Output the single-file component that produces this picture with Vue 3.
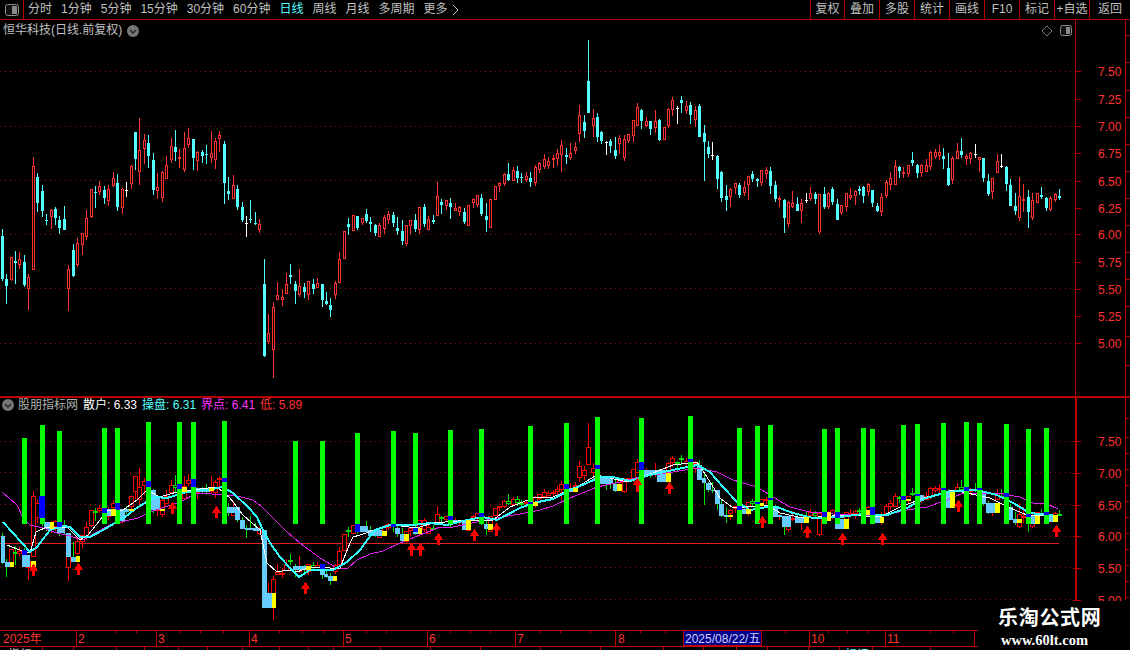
<script setup>
const parse = (s, ox, oy) =>
  s.trim().split(/\s*;\s*/).map((r) => {
    const [x, h, t, b, l, k] = r.split(' ')
    return {
      x: Math.floor(ox + +x / 3),
      h: oy + +h / 3,
      t: Math.round(oy + +t / 3),
      b: Math.round(oy + +b / 3),
      l: oy + +l / 3,
      k
    }
  })

const candles = [
  ...parse(`7 327 348 477 483 c;19 462 477 498 552 c;34 410 412 480 482 r;46 393 423 429 492 c;58 396 417 435 447 r;73 405 426 495 501 c;85 462 471 507 570 r;100 111 138 450 450 r;112 159 171 249 276 c;127 195 213 273 291 c;139 282 300 303 315 c;154 267 270 291 327 r;166 261 267 294 315 c;178 288 300 324 342 c;193 258 297 330 330 c;205 435 447 507 573 r;220 372 390 468 471 c;232 354 369 435 441 r;247 339 339 375 405 r;259 270 294 351 360 r;274 207 207 291 294 r;286 198 216 219 264 c;298 183 198 216 225 r;313 198 210 234 252 c;325 195 207 243 258 r;340 156 174 198 201 r;352 162 189 261 273 c;367 204 207 264 282 r;379 186 210 213 231 w;394 135 138 192 207 r;406 36 36 117 150 c;418 -6 90 156 195 r;433 42 60 87 132 r;445 45 69 108 144 c;460 99 120 210 225 c;472 159 201 213 237 r;487 153 156 234 246 r;499 108 135 177 177 r;514 54 78 120 129 r;526 30 81 96 123 c;538 87 111 117 144 r;553 36 84 150 156 r;565 24 54 75 84 r;580 57 57 114 150 c;592 93 96 123 153 r;607 90 96 108 129 c;619 75 102 105 132 c;634 33 99 114 129 r;646 54 63 120 147 r;658 33 45 57 96 r;673 63 72 189 252 c;685 171 213 222 240 c;700 165 195 237 237 r;712 195 207 261 270 c;727 246 261 300 306 c;739 288 309 312 351 w;751 240 297 300 309 c;766 276 309 312 315 c;778 297 312 330 339 r;793 417 492 708 711 c;805 582 639 666 672 r`, 0, 120),
  ...parse(`10 816 831 960 1044 r;22 756 795 810 810 r;37 777 801 810 828 r;49 729 762 792 792 r;61 702 735 741 762 c;76 753 762 783 822 c;88 717 768 795 801 r;103 759 771 786 804 c;115 753 753 795 810 r;130 747 762 777 792 c;142 744 759 774 774 r;157 762 762 810 831 c;169 786 813 822 825 c;181 804 825 840 861 c;196 753 759 795 807 r;208 666 687 759 759 r;223 603 603 687 687 r;235 564 582 591 615 c;250 555 555 603 603 r;262 558 558 594 600 c;277 564 564 579 585 r;289 537 552 573 579 c;301 561 576 582 606 c;316 582 585 609 618 c;328 579 585 621 621 r;343 555 561 597 612 r;355 543 552 570 582 r;370 546 555 579 591 c;382 561 594 603 615 c;397 570 603 633 645 c;409 585 585 642 648 r;421 570 570 588 612 r;436 552 570 597 606 c;448 531 531 600 612 r;463 522 531 582 591 c;475 558 567 600 600 r;490 555 570 576 582 c;502 456 498 558 558 r;514 507 516 525 552 c;529 510 510 528 540 r;541 504 519 531 567 c;556 519 534 543 543 r;568 528 531 546 558 r;583 534 546 576 582 c;595 525 525 588 588 r;610 504 507 519 534 r;622 495 495 525 531 r;634 492 504 552 558 c;649 519 558 570 606 c;661 507 507 594 594 r;676 468 468 510 510 r;688 456 459 468 486 r;703 429 432 462 468 r;715 399 432 450 453 c;730 411 420 453 453 r;742 408 423 444 459 c;754 429 441 444 459 c;769 426 438 450 456 r;781 426 444 456 471 c;796 405 411 459 468 r;808 396 399 420 429 r`, 270, 30),
  ...parse(`13 372 387 411 417 r;25 381 393 408 417 r;40 375 384 390 414 r;52 357 369 387 408 r;64 330 345 375 426 r;79 354 375 381 402 c;91 339 369 384 390 r;106 336 351 363 372 r;118 225 255 312 336 r;133 255 276 303 324 c;145 30 153 249 249 c;160 237 264 288 321 r;172 249 261 321 336 c;184 303 306 333 342 c;199 333 336 339 375 w;211 327 333 348 369 c;226 321 360 378 387 c;238 315 324 342 372 r;253 315 327 384 393 r;265 312 312 333 339 r;280 270 270 318 336 r;292 219 231 288 288 r;304 237 240 273 297 c;319 261 273 288 291 r;331 273 273 297 315 c;346 240 273 294 309 r;358 267 270 330 333 c;373 291 291 330 330 r;385 234 237 288 294 r;397 201 210 240 258 r;412 228 234 237 282 w;424 198 210 219 249 c;439 213 228 243 252 r;451 216 225 255 282 c;466 228 240 270 291 r;478 222 228 321 321 c;493 285 309 336 453 c;505 333 351 372 384 c;517 336 375 378 390 w;532 375 378 447 477 c;544 423 426 504 516 c;559 465 498 510 543 c;571 474 477 501 531 r;586 459 459 474 492 r;598 459 465 495 504 c;613 453 471 489 498 r;625 438 438 465 510 r;637 423 432 447 456 c;652 444 447 453 471 c;664 420 420 459 468 r;679 411 420 432 447 r;691 411 423 468 492 c;706 453 465 507 516 c;718 498 504 510 531 r;733 507 510 564 609 c;745 513 516 582 591 r;757 483 519 531 534 r;772 501 522 543 543 c;784 507 519 543 579 r;799 489 510 513 519 w`, 540, 30),
  ...parse(`0 201 219 237 243 r;15 216 222 237 252 c;28 222 222 336 342 r;43 201 222 261 267 c;55 216 219 261 267 r;67 201 207 246 255 c;82 237 252 300 300 c;94 255 255 279 285 r;109 219 219 261 273 r;121 204 225 234 240 r;136 210 213 228 255 r;148 198 207 213 225 c;160 198 201 228 249 c;175 189 192 216 228 r;187 210 210 249 261 c;202 249 258 273 276 c;214 219 231 276 288 r;229 180 186 228 234 r;241 156 174 195 210 r;256 120 138 195 195 r;268 138 141 153 174 c;280 141 156 162 174 r;295 135 135 162 171 r;307 96 120 129 138 c;322 132 135 159 174 c;334 132 135 159 171 r;349 117 135 156 156 r;361 93 96 141 150 r;376 87 96 111 117 r;388 75 96 108 120 r;400 84 108 117 147 c;415 99 144 195 198 c;427 108 114 180 192 r;442 69 93 117 117 r;454 54 93 105 114 c;469 102 108 117 135 r;481 96 99 117 132 r;496 72 102 105 114 w;508 111 111 120 156 r;520 114 114 174 186 c;535 162 183 222 228 c;547 174 174 216 237 r;562 102 123 159 159 r;574 102 138 141 144 w;589 138 141 192 213 c;601 177 195 258 258 c;616 219 258 273 285 c;628 171 228 294 303 r;640 192 237 243 276 r;655 210 231 276 324 c;667 219 240 294 300 r;682 219 219 249 249 r;694 201 225 231 237 c;709 231 234 264 273 c;721 228 234 270 273 r;736 219 222 240 246 r;748 207 228 234 240 c`, 810, 120)
]

const upperGrid = [71.5, 126.5, 180.5, 234.5, 288.5, 343.5]
const upperLabels = [
  ['7.50', 71], ['7.25', 99], ['7.00', 126], ['6.75', 153], ['6.50', 181], ['6.25', 208],
  ['6.00', 234], ['5.75', 262], ['5.50', 289], ['5.25', 316], ['5.00', 343]
]
const lowerGrid = [441.5, 472.5, 504.5, 536.5, 567.5, 599.5]
const lowerLabels = [['7.50', 441], ['7.00', 473], ['6.50', 505], ['6.00', 536], ['5.50', 568], ['5.00', 600]]

const bars = [[22,438],[40,425],[57,431],[102,428],[115,428],[146,422],[177,422],[191,422],[222,421],[293,441],[320,441],[355,433],[391,431],[413,433],[448,430],[479,429],[528,426],[564,423],[595,417],[639,418],[688,416],[737,428],[755,426],[768,425],[822,429],[835,428],[861,428],[870,429],[901,425],[915,424],[941,423],[964,422],[977,423],[1004,424],[1026,429],[1044,428]]

const sky = [[1,5,536,563],[5,10,562,567],[22,30,555,567],[44,50,522,529],[57,65,527,533],[66,71,533,557],[71,76,557,562],[107,111,509,516],[120,125,509,521],[125,129,509,512],[151,156,490,510],[156,160,496,510],[196,210,488,492],[227,235,507,513],[235,240,507,520],[240,245,520,529],[245,253,528,530],[253,261,528,531],[262,267,530,608],[267,272,593,608],[293,307,566,570],[320,325,569,575],[324,328,574,577],[328,333,576,581],[360,368,526,532],[368,382,530,536],[395,400,528,534],[400,404,534,541],[413,418,532,534],[453,462,520,522],[462,466,520,530],[484,488,524,529],[569,573,488,492],[600,613,477,484],[613,617,484,491],[644,657,470,475],[657,666,470,482],[697,702,465,480],[702,706,478,483],[706,711,483,490],[711,715,490,491],[715,720,490,504],[719,724,504,516],[724,728,515,517],[742,746,509,514],[773,778,508,517],[778,782,515,517],[782,791,516,527],[795,804,517,523],[835,840,524,529],[840,844,519,529],[875,880,517,523],[920,924,495,501],[946,950,492,508],[982,986,491,504],[986,995,503,513],[1009,1013,507,520],[1013,1017,519,523],[1031,1035,516,524],[1049,1053,515,522]]

const yellow = [[10,14,562,567],[31,36,561,567],[50,54,522,529],[76,80,556,562],[111,116,509,516],[129,134,509,511],[160,165,509,511],[182,187,487,492],[209,214,488,491],[272,276,593,608],[306,311,566,570],[333,337,576,581],[382,387,531,536],[404,409,534,541],[418,422,528,534],[466,471,520,530],[488,493,524,530],[533,538,502,506],[573,578,488,492],[617,622,484,491],[666,671,473,482],[728,733,515,517],[746,751,509,514],[760,764,503,506],[804,809,517,523],[827,831,512,521],[844,849,519,529],[866,870,510,515],[880,884,517,523],[906,911,499,501],[950,955,492,508],[995,1000,503,513],[1017,1022,519,523],[1035,1040,516,524],[1053,1058,515,522]]

const blue = [[22,27,550,555],[39,45,496,518],[57,62,522,527],[102,107,508,513],[115,120,503,510],[146,151,481,487],[177,182,484,489],[191,196,479,487],[222,227,478,482],[320,325,564,569],[355,360,524,532],[391,396,524,527],[413,418,528,532],[448,453,516,520],[479,484,513,517],[528,533,502,504],[564,569,484,489],[595,600,465,469],[639,644,462,470],[688,693,459,462],[737,742,506,510],[755,760,502,504],[768,773,498,500],[822,827,512,517],[835,840,512,518],[870,875,507,515],[901,906,496,500],[915,920,494,496],[941,946,488,490],[964,969,487,491],[977,982,488,490],[1004,1009,493,497],[1026,1031,514,517],[1044,1049,512,515]]

const map = (y) => Math.round(536.3 + (y - 234.5) * 0.585)
const covered = (x) => [...sky, ...yellow, ...blue].some((r) => x >= r[0] - 1 && x <= r[1])
const lowerCandles = candles.map((c) => {
  const t = map(c.t)
  const b = Math.max(map(c.b), t + 1)
  let k = c.k
  if (k !== 'r') {
    if (covered(c.x)) k = 'g'
    else k = b - t >= 6 ? 'r' : 'h'
  }
  return { x: c.x, k, h: map(c.h), t, b, l: map(c.l) }
})

const arrowData = [[33,564,576],[78,563,575],[172,502,514],[216,506,518],[305,582,594],[411,543,556],[420,543,556],[438,533,545],[474,529,541],[496,523,536],[637,478,492],[669,482,494],[762,516,528],[807,526,538],[842,533,545],[882,533,545],[958,500,512],[1056,525,537]]
const arrows = arrowData.map(([x, t, b]) =>
  `${x + 0.5},${t} ${x + 5.5},${t + 7} ${x + 2},${t + 7} ${x + 2},${b} ${x - 1},${b} ${x - 1},${t + 7} ${x - 4.5},${t + 7}`
)

const magenta = '2,492 17,505 23,518 30,525 43,528 57,533 70,536 83,540 97,532 110,525 125,521 138,518 150,512 165,507 180,502 197,493 212,494 225,495 233,495 253,500 262,507 273,518 287,532 300,543 320,558 337,568 348,568 357,560 370,554 383,551 400,543 420,535 440,527 453,527 477,522 497,518 520,514 540,510 553,506 570,498 597,487 620,482 640,477 667,473 697,468 717,472 733,480 757,487 773,497 790,507 810,512 833,514 867,516 890,514 907,510 927,507 947,500 963,493 980,493 997,493 1020,497 1033,503 1047,504 1058,509'
const cyan = '3,522 22,543 30,552 37,547 50,530 63,526 70,527 80,537 90,537 103,530 115,523 125,517 138,507 155,497 167,498 187,492 213,489 222,487 233,493 248,507 257,517 263,530 270,543 280,557 290,568 299,577 310,570 323,570 333,570 347,562 360,550 365,543 375,530 390,525 413,525 430,523 447,525 467,520 483,517 497,520 520,508 533,503 553,499 570,490 587,483 600,477 613,477 630,481 650,475 673,470 697,465 710,472 723,487 737,502 750,510 767,507 777,507 793,513 813,518 840,517 863,514 887,515 907,508 923,499 947,492 977,490 997,495 1013,503 1030,513 1057,516'
const white = '7,545 17,549 30,553 36,532 47,527 67,527 80,540 88,535 100,520 107,510 123,510 137,500 147,490 160,497 177,492 200,489 217,487 230,498 243,515 260,530 267,563 277,572 287,570 297,572 310,567 330,568 340,568 350,543 353,537 360,535 377,529 393,525 417,528 433,523 470,520 493,520 510,507 533,498 553,497 577,487 597,475 610,478 627,482 653,473 673,465 697,462 707,477 720,498 733,508 767,505 780,513 803,518 847,515 880,517 900,507 927,497 953,490 990,498 1010,508 1027,515 1058,516'

const tools = ['分时', '1分钟', '5分钟', '15分钟', '30分钟', '60分钟', '日线', '周线', '月线', '多周期']
const actions = [['复权', 34], ['叠加', 35], ['多股', 35], ['统计', 35], ['画线', 35], ['F10', 35], ['标记', 35], ['+自选', 35], ['返回', 41]]

const majorTicks = [76, 156, 249, 343, 427, 515, 615, 809, 885, 974]
const minorTicks = [116, 136, 180, 200, 223, 279, 302, 324, 366, 386, 450, 470, 490, 540, 560, 590, 640, 665, 785, 828, 847, 867, 930, 953]
const months = [['2', 78], ['3', 158], ['4', 251], ['5', 345], ['6', 429], ['7', 517], ['8', 618], ['10', 811], ['11', 887]]
const tabStops = [42, 73, 116, 144, 178, 207, 242, 279, 308, 333, 380, 430, 480, 540, 600, 663, 703, 736, 767, 808, 839, 872, 930]
const rightUpper = [35, 62, 90, 117, 144, 171, 198, 225, 252, 279, 306, 336, 365]
const rightLower = [418, 437, 453, 469, 485, 501, 517, 533, 549, 565, 581, 597]
</script>

<template>
  <div class="page">
    <header class="toolbar">
      <div class="side-btn">
        <svg width="14" height="12" viewBox="0 0 14 12">
          <rect x="0.5" y="0.5" width="13" height="11" rx="2" fill="#111" stroke="#8a8a8a" />
          <rect x="7" y="2" width="5" height="8" fill="#8a8a8a" />
        </svg>
      </div>
      <nav class="periods">
        <span v-for="t in tools" :key="t" class="period" :class="{ on: t === '日线' }">{{ t }}</span>
        <span class="period more">更多
          <svg width="7" height="12" viewBox="0 0 7 12">
            <path d="M1 1 L6 6 L1 11" fill="none" stroke="#c0c0c0" />
          </svg>
        </span>
      </nav>
      <div class="actions">
        <span v-for="a in actions" :key="a[0]" class="action" :style="{ width: a[1] + 'px' }">{{ a[0] }}</span>
      </div>
    </header>

    <section class="panel upper">
      <svg class="plot" width="1130" height="376" viewBox="0 20 1130 376" shape-rendering="crispEdges">
        <line v-for="y in upperGrid" :key="y" x1="0" x2="1075" :y1="y" :y2="y" class="grid" />
        <rect x="1075" y="20" width="1" height="376" fill="#b80000" />
        <rect x="1125" y="20" width="1" height="376" fill="#b80000" />
        <rect v-for="y in rightUpper" :key="'ru' + y" x="1125" :y="y" width="5" height="1" fill="#b80000" />
        <g v-for="l in upperLabels" :key="l[0]">
          <rect x="1076" :y="l[1]" width="5" height="1" fill="#b80000" />
          <text x="1098" :y="l[1] + 5" class="price">{{ l[0] }}</text>
        </g>
        <template v-for="(c, i) in candles" :key="i">
          <rect v-if="c.k === 'r'" :x="c.x" :y="c.h" width="1" :height="c.l - c.h" fill="#ff3232" />
          <rect v-if="c.k === 'c'" :x="c.x" :y="c.h" width="1" :height="c.l - c.h" fill="#54ffff" />
          <rect v-if="c.k === 'w'" :x="c.x" :y="c.h" width="1" :height="c.l - c.h" fill="#fff" />
          <rect v-if="c.k === 'r'" :x="c.x - 0.5" :y="c.t + 0.5" width="2" :height="Math.max(c.b - c.t - 1, 1)" transform="translate(-0.5 0)" fill="#000" stroke="#ff3232" />
          <rect v-if="c.k === 'c'" :x="c.x - 1" :y="c.t" width="3" :height="Math.max(c.b - c.t, 1)" fill="#54ffff" />
          <rect v-if="c.k === 'w'" :x="c.x - 1" :y="c.t" width="3" height="1" fill="#fff" />
        </template>
      </svg>
      <div class="title">
        <span>恒华科技(日线.前复权)</span>
        <svg class="chev" width="12" height="12" viewBox="0 0 12 12">
          <circle cx="6" cy="6" r="6" fill="#777" />
          <path d="M3 5 L6 8 L9 5" fill="none" stroke="#222" stroke-width="1.4" />
        </svg>
      </div>
      <div class="win-tools">
        <svg width="12" height="12" viewBox="0 0 12 12">
          <path d="M6 1 L11 6 L6 11 L1 6 Z" fill="none" stroke="#777" />
        </svg>
        <svg width="12" height="11" viewBox="0 0 12 11">
          <rect x="0.5" y="0.5" width="11" height="10" rx="2" fill="#111" stroke="#8a8a8a" />
          <rect x="6" y="2" width="4" height="7" fill="#8a8a8a" />
        </svg>
      </div>
    </section>

    <div class="sep"></div>

    <section class="panel lower">
      <svg class="plot" width="1130" height="232" viewBox="0 398 1130 232" shape-rendering="crispEdges">
        <line v-for="y in lowerGrid" :key="y" x1="0" x2="1075" :y1="y" :y2="y" class="grid" />
        <rect x="1075" y="398" width="2" height="202" fill="#b80000" />
        <rect x="1125" y="398" width="1" height="202" fill="#b80000" />
        <rect v-for="y in rightLower" :key="'rl' + y" x="1125" :y="y" width="4" height="1" fill="#b80000" />
        <g v-for="l in lowerLabels" :key="l[0]">
          <rect x="1073" :y="l[1]" width="8" height="1" fill="#b80000" />
          <text x="1098" :y="l[1] + 5" class="price">{{ l[0] }}</text>
        </g>
        <rect x="0" y="543" width="1059" height="1" fill="#e02020" />

        <template v-for="(c, i) in lowerCandles" :key="'l' + i">
          <rect :x="c.x" :y="c.h" width="1" :height="Math.max(c.l - c.h, 1)" :fill="c.k === 'r' ? '#f00' : '#00e000'" />
          <rect v-if="c.k === 'r'" :x="c.x - 1.5" :y="c.t + 0.5" width="4" :height="Math.max(c.b - c.t - 1, 1)" fill="#000" stroke="#f00" />
          <rect v-if="c.k === 'h'" :x="c.x - 1.5" :y="c.t + 0.5" width="4" :height="Math.max(c.b - c.t - 1, 1)" fill="#000" stroke="#00e000" />
        </template>
        <rect v-for="(r, i) in sky" :key="'s' + i" :x="r[0]" :y="r[2]" :width="r[1] - r[0]" :height="r[3] - r[2]" fill="#66ccff" />

        <g fill="none">
          <polyline :points="magenta" stroke="#e020f0" stroke-width="1" />
          <polyline :points="white" stroke="#fff" stroke-width="1" />
          <polyline :points="cyan" stroke="#30ffff" stroke-width="2" />
        </g>

        <rect v-for="b in bars" :key="'b' + b[0]" :x="b[0]" :y="b[1]" width="5" :height="524 - b[1]" fill="#00ff00" />
        <rect v-for="(r, i) in blue" :key="'u' + i" :x="r[0]" :y="r[2]" :width="r[1] - r[0]" :height="r[3] - r[2]" fill="#0000ff" />
        <rect v-for="(r, i) in yellow" :key="'y' + i" :x="r[0]" :y="r[2]" :width="r[1] - r[0]" :height="r[3] - r[2]" fill="#ffff00" />
        <polygon v-for="(p, i) in arrows" :key="'a' + i" :points="p" fill="#f00" />
      </svg>
      <div class="indicator">
        <svg class="chev-l" width="12" height="12" viewBox="0 0 12 12">
          <circle cx="6" cy="6" r="6" fill="#777" />
          <path d="M3 5 L6 8 L9 5" fill="none" stroke="#222" stroke-width="1.4" />
        </svg>
        <span class="ind-name">股朋指标网</span>
        <span class="v-white">散户: 6.33</span>
        <span class="v-cyan">操盘: 6.31</span>
        <span class="v-mag">界点: 6.41</span>
        <span class="v-red">低: 5.89</span>
      </div>
    </section>

    <footer class="timescale">
      <svg width="1130" height="20" viewBox="0 630 1130 20" shape-rendering="crispEdges">
        <rect x="0" y="630" width="978" height="1" fill="#c00000" />
        <rect x="0" y="646" width="978" height="1" fill="#c00000" />
        <rect v-for="x in majorTicks" :key="'m' + x" :x="x" y="630" width="1" height="16" fill="#c00000" />
        <rect v-for="x in minorTicks" :key="'n' + x" :x="x" y="630" width="1" height="3" fill="#c00000" />
        <rect v-for="x in tabStops" :key="'t' + x" :x="x" y="646" width="1" height="4" fill="#c00000" />
        <text x="3" y="643" class="scale">2025年</text>
        <text v-for="m in months" :key="m[0]" :x="m[1]" y="643" class="scale">{{ m[0] }}</text>
        <rect x="683.5" y="630.5" width="78" height="15" fill="#000088" stroke="#c00000" />
        <text x="685" y="643" class="scale date">2025/08/22/五</text>
        <text x="8" y="659" class="tab">指标</text>
        <text x="845" y="659" class="tab tab-on">标记</text>
      </svg>
    </footer>

    <div class="watermark">
      <div class="wm-title">乐淘公式网</div>
      <div class="wm-url">www.60lt.com</div>
    </div>
  </div>
</template>

<style scoped>
.page {
  position: relative;
  width: 1130px;
  height: 650px;
  overflow: hidden;
  background: #000;
  display: flex;
  flex-direction: column;
  font-family: "Liberation Sans", "Noto Sans CJK SC", sans-serif;
  font-size: 12px;
  color: #c0c0c0;
}
.toolbar {
  height: 20px;
  flex: none;
  display: flex;
  box-sizing: border-box;
  border-bottom: 1px solid #b80000;
}
.side-btn {
  width: 24px;
  box-sizing: border-box;
  border-right: 1px solid #b80000;
  display: flex;
  align-items: center;
  justify-content: center;
}
.periods {
  flex: 1;
  display: flex;
  gap: 9px;
  padding-left: 4px;
  line-height: 19px;
}
.more {
  display: flex;
  align-items: center;
  gap: 4px;
}
.on {
  color: #54ffff;
}
.actions {
  display: flex;
}
.action {
  box-sizing: border-box;
  border-left: 1px solid #b80000;
  text-align: center;
  line-height: 19px;
}
.panel {
  position: relative;
  flex: none;
}
.plot {
  display: block;
}
.sep {
  height: 2px;
  flex: none;
  background: #b80000;
}
.grid {
  stroke: #a00000;
  stroke-width: 1;
  stroke-dasharray: 1 4;
}
.price {
  fill: #ff3232;
  font-size: 12px;
}
.title {
  position: absolute;
  left: 3px;
  top: 2px;
  display: flex;
  align-items: center;
  gap: 5px;
  line-height: 16px;
}
.chev {
  margin-top: 1px;
}
.win-tools {
  position: absolute;
  left: 1041px;
  top: 5px;
  display: flex;
  gap: 7px;
}
.indicator {
  position: absolute;
  left: 2px;
  top: -1px;
  display: flex;
  align-items: center;
  gap: 5px;
  line-height: 16px;
}
.chev-l {
  margin-right: -1px;
}
.ind-name {
  color: #b0b0b0;
}
.v-white {
  color: #fff;
}
.v-cyan {
  color: #54ffff;
}
.v-mag {
  color: #ff32ff;
}
.v-red {
  color: #ff3232;
}
.timescale {
  height: 20px;
  flex: none;
}
.timescale svg {
  display: block;
}
.scale {
  fill: #ff3232;
  font-size: 12px;
}
.date {
  fill: #d0d0ff;
}
.tab {
  fill: #c0c0c0;
  font-size: 12px;
}
.tab-on {
  fill: #54ffff;
}
.watermark {
  position: absolute;
  left: 978px;
  top: 601px;
  width: 152px;
  height: 49px;
  background: #000;
  color: #fff;
  font-family: "Liberation Serif", "Noto Sans CJK SC", serif;
  font-weight: 700;
}
.wm-title {
  position: absolute;
  left: 20px;
  top: 5px;
  font-size: 20px;
  line-height: 24px;
  letter-spacing: 0.7px;
  white-space: nowrap;
}
.wm-url {
  position: absolute;
  left: 23px;
  top: 32px;
  font-size: 14.5px;
  line-height: 14px;
  white-space: nowrap;
}
</style>
